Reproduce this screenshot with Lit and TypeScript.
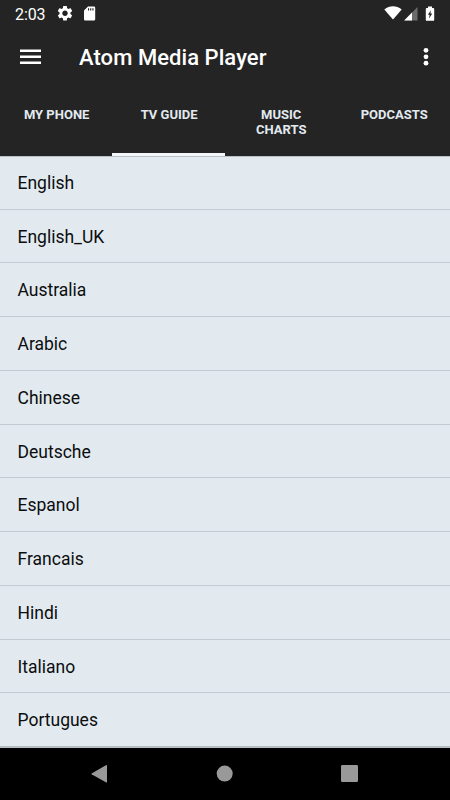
import { LitElement, html, css } from "lit";
import { customElement, property } from "lit/decorators.js";
import { classMap } from "lit/directives/class-map.js";

@customElement("status-bar")
class StatusBar extends LitElement {
  static styles = css`
    :host { display: flex; align-items: center; height: 27px; padding: 0 15px; color: #fff; }
    .time { font-size: 16px; line-height: 27px; width: 42px; letter-spacing: -0.1px; padding-top: 1px; box-sizing: border-box; height: 27px; }
    .left { flex: 1; display: flex; align-items: center; gap: 10px; }
    .right { display: flex; align-items: center; }
    svg { display: block; fill: #fff; }
    .signal { margin-left: 2px; }
    .battery { margin-left: 7px; }
    .dim { fill: #6b6b6b; }
    .dark { fill: #242424; }
  `;
  render() {
    return html`
      <div class="time">2:03</div>
      <div class="left">
        <svg width="16" height="16" viewBox="1.5 2.5 21 21"><path d="M19.14 12.94c.04-.3.06-.61.06-.94 0-.32-.02-.64-.07-.94l2.03-1.58c.18-.14.23-.41.12-.61l-1.92-3.32c-.12-.22-.37-.29-.59-.22l-2.39.96c-.5-.38-1.03-.7-1.62-.94l-.36-2.54c-.04-.24-.24-.41-.48-.41h-3.84c-.24 0-.43.17-.47.41l-.36 2.54c-.59.24-1.13.57-1.62.94l-2.39-.96c-.22-.08-.47 0-.59.22L2.74 8.87c-.12.21-.08.47.12.61l2.03 1.58c-.05.3-.09.63-.09.94s.02.64.07.94l-2.03 1.58c-.18.14-.23.41-.12.61l1.92 3.32c.12.22.37.29.59.22l2.39-.96c.5.38 1.03.7 1.62.94l.36 2.54c.05.24.24.41.48.41h3.84c.24 0 .44-.17.47-.41l.36-2.54c.59-.24 1.13-.56 1.62-.94l2.39.96c.22.08.47 0 .59-.22l1.92-3.32c.12-.22.07-.47-.12-.61l-2.01-1.58zM12 15.6c-1.98 0-3.6-1.62-3.6-3.6s1.62-3.6 3.6-3.6 3.6 1.62 3.6 3.6-1.62 3.6-3.6 3.6z"/></svg>
        <svg width="13" height="16" viewBox="0 0 13 16"><path d="M5 .5h6a1.200 1.200 0 0 1 1.200 1.200v11.600A1.200 1.200 0 0 1 11 14.500H2.200A1.200 1.200 0 0 1 1 13.300V4.500z"/><path class="dark" d="M5 2.200h1.100v2.400H5zM7.200 2.200h1.100v2.400H7.200zM9.400 2.200h1.100v2.400H9.400z"/></svg>
      </div>
      <div class="right">
        <svg width="18" height="15" viewBox="0 0 18 15"><path d="M.3 3.600C3 1.200 6 .2 9 .2s6 1 8.700 3.400L9 13.600z"/></svg>
        <svg class="signal" width="14" height="15" viewBox="0 0 14 15"><path class="dim" d="M13.500 1v13.500H.2z"/><path d="M8 6.600v7.900H.2z"/></svg>
        <svg class="battery" width="10" height="16" viewBox="0 0 10 16"><path d="M3 .5h4V2h1.300c.5 0 .9.400.9.900v11c0 .5-.4.900-.9.900H1.700c-.5 0-.9-.4-.9-.9v-11c0-.5.4-.9.900-.9H3z"/><path class="dark" d="M5.900 4.200L5.400 7.500h1.900l-3.200 5 .5-3.700H2.900z"/></svg>
      </div>
    `;
  }
}

@customElement("tool-bar")
class ToolBar extends LitElement {
  static styles = css`
    :host { display: flex; align-items: center; height: 61px; padding: 0 20px; color: #fff; }
    .title { flex: 1; margin-left: 38px; font-size: 22px; font-weight: 500; line-height: 61px; letter-spacing: 0.06px; white-space: nowrap; }
    svg { display: block; fill: #fff; }
    .menu { margin-bottom: 2px; }
    .more { margin-bottom: 1px; }
  `;
  render() {
    return html`
      <svg class="menu" width="21" height="16" viewBox="0 0 21 16"><path d="M0 .5h21v2.500H0zM0 6.500h21v2.500H0zM0 12.500h21v2.500H0z"/></svg>
      <div class="title">Atom Media Player</div>
      <svg class="more" width="8" height="20" viewBox="0 0 8 20"><circle cx="4" cy="3.300" r="2.400"/><circle cx="4" cy="9.800" r="2.400"/><circle cx="4" cy="16.200" r="2.400"/></svg>
    `;
  }
}

@customElement("tab-strip")
class TabStrip extends LitElement {
  @property({ attribute: false }) tabs: string[] = [];
  @property({ type: Number }) active = 0;
  static styles = css`
    :host { display: grid; grid-template-columns: 112px 113px 112px 113px; height: 68px; }
    .tab { box-sizing: border-box; padding: 19px 9px 0 10.300px; text-align: center; color: #e2eaf0; font-size: 13px; font-weight: 700; line-height: 15.400px; border-bottom: 3px solid transparent; }
    .narrow { padding-left: 20.500px; padding-right: 20px; }
    .active { border-bottom-color: #f2f6f8; }
  `;
  render() {
    return this.tabs.map((t, i) => html`<div class=${classMap({ tab: true, narrow: t.includes("CHARTS"), active: i === this.active })}>${t}</div>`);
  }
}

@customElement("nav-bar")
class NavBar extends LitElement {
  static styles = css`
    :host { flex: none; display: flex; align-items: center; justify-content: space-between; height: 52px; padding: 0 91px; background: #000; }
    svg { display: block; fill: #999; }
  `;
  render() {
    return html`
      <svg width="18" height="20" viewBox="0 0 18 20"><path d="M15.300 1.100Q16 .8 16 1.600v16.400q0 .8-.7.500L.6 10.300q-.5-.5 0-.9z"/></svg>
      <svg width="18" height="20" viewBox="0 0 18 20"><circle cx="8.700" cy="9.600" r="8"/></svg>
      <svg width="18" height="20" viewBox="0 0 18 20"><rect x="0" y="1" width="17" height="17" rx="1.200"/></svg>
    `;
  }
}

@customElement("app-root")
class AppRoot extends LitElement {
  private languages = ["English", "English_UK", "Australia", "Arabic", "Chinese", "Deutsche", "Espanol", "Francais", "Hindi", "Italiano", "Portugues"];
  static styles = css`
    :host { display: flex; flex-direction: column; width: 450px; height: 800px; overflow: hidden; background: #e2eaf0; font-family: Roboto, sans-serif; }
    .header { flex: none; background: #242424; }
    .list { flex: 1; min-height: 0; display: grid; grid-template-rows: 52.600px repeat(9, 53.750px) minmax(0, 1fr); box-sizing: border-box; border-top: 1px solid #b9c0c5; }
    .row { box-sizing: border-box; min-height: 0; padding-left: 17.500px; border-bottom: 1px solid #c3cbd2; color: #0c0d0e; font-size: 17.500px; line-height: 55.600px; }
    .row:first-child { line-height: 53px; }
    .row:last-child { border-bottom: 2px solid #b4bec2; }
  `;
  render() {
    return html`
      <div class="header">
        <status-bar></status-bar>
        <tool-bar></tool-bar>
        <tab-strip .tabs=${["MY PHONE", "TV GUIDE", "MUSIC CHARTS", "PODCASTS"]} .active=${1}></tab-strip>
      </div>
      <div class="list">${this.languages.map((l) => html`<div class="row">${l}</div>`)}</div>
      <nav-bar></nav-bar>
    `;
  }
}
